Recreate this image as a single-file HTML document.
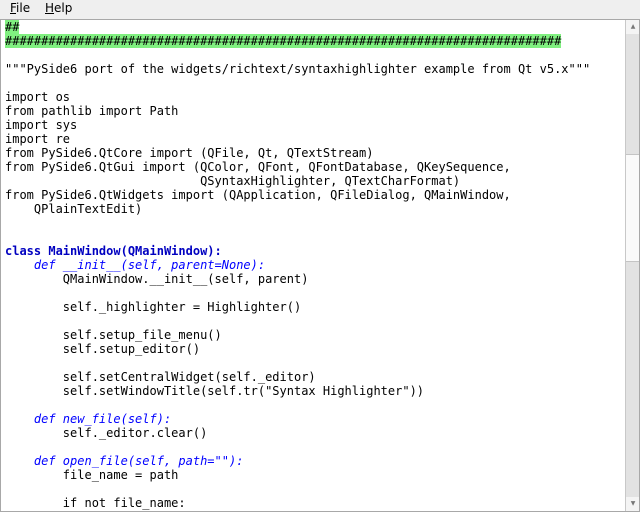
<!DOCTYPE html>
<html><head><style>
body{margin:0;width:640px;height:512px;background:#efefef;overflow:hidden;font-family:"DejaVu Sans","Liberation Sans",sans-serif;}
.menu{height:19px;font-size:12px;line-height:17px;}
.menu span{position:absolute;top:0}
.ed{position:absolute;left:0;top:19px;width:638px;height:491px;border:1px solid #a8a8a8;background:#fff;overflow:hidden}
pre{margin:0;position:absolute;left:4px;top:0;font-family:"DejaVu Sans Mono",monospace;font-size:12px;line-height:14px;color:#000}
.g{background:#80f080}
.k{color:#0000c0;font-weight:bold}
.f{color:#0000ff;font-style:italic}
.sb{position:absolute;left:624px;top:0;width:14px;height:491px;background:#e2e2e2;border-left:1px solid #c8c8c8}
.th{position:absolute;left:0;top:134px;width:14px;height:106px;background:#fafafa;border-top:1px solid #c4c4c4;border-bottom:1px solid #c4c4c4}
.ar{position:absolute;left:0;width:14px;height:14px;background:#f4f4f4;font-size:6px;text-align:center;line-height:14px;color:#777}
</style></head><body>
<div class="menu"><span style="left:10px"><u>F</u>ile</span><span style="left:45px"><u>H</u>elp</span></div>
<div class="ed">
<pre><span class="g">##</span>
<span class="g">#############################################################################</span>

"""PySide6 port of the widgets/richtext/syntaxhighlighter example from Qt v5.x"""

import os
from pathlib import Path
import sys
import re
from PySide6.QtCore import (QFile, Qt, QTextStream)
from PySide6.QtGui import (QColor, QFont, QFontDatabase, QKeySequence,
                           QSyntaxHighlighter, QTextCharFormat)
from PySide6.QtWidgets import (QApplication, QFileDialog, QMainWindow,
    QPlainTextEdit)


<span class="k">class MainWindow(QMainWindow):</span>
    <span class="f">def __init__(self, parent=None):</span>
        QMainWindow.__init__(self, parent)

        self._highlighter = Highlighter()

        self.setup_file_menu()
        self.setup_editor()

        self.setCentralWidget(self._editor)
        self.setWindowTitle(self.tr("Syntax Highlighter"))

    <span class="f">def new_file(self):</span>
        self._editor.clear()

    <span class="f">def open_file(self, path=""):</span>
        file_name = path

        if not file_name:
</pre>
<div class="sb"><div class="ar" style="top:0">▲</div><div class="th"></div><div class="ar" style="top:477px">▼</div></div>
</div>
</body></html>
